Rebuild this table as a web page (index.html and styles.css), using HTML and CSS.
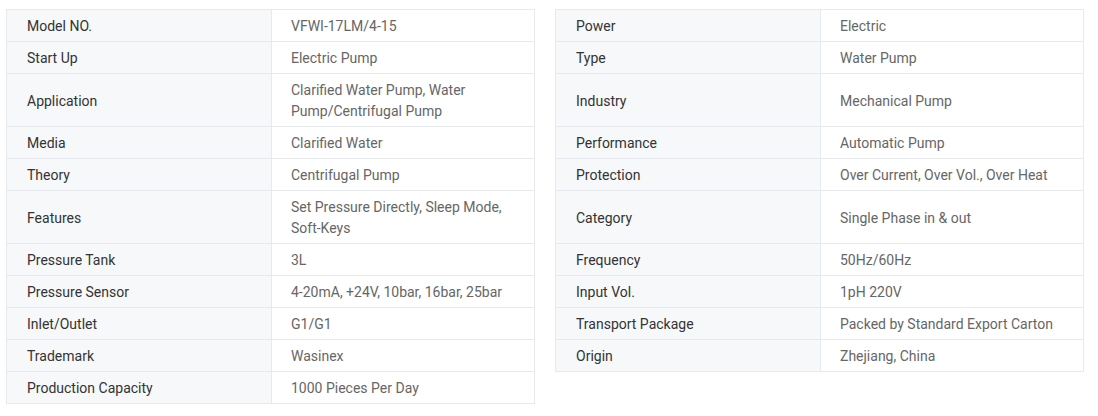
FILE: index.html
```html
<!DOCTYPE html>
<html>
<head>
<meta charset="utf-8">
<link rel="stylesheet" href="styles.css">
</head>
<body>
<div class="wrap">
  <table class="spec">
    <colgroup><col class="c-label"><col class="c-value"></colgroup>
    <tr><td class="label">Model NO.</td><td class="value">VFWI-17LM/4-15</td></tr>
    <tr><td class="label">Start Up</td><td class="value">Electric Pump</td></tr>
    <tr><td class="label">Application</td><td class="value">Clarified Water Pump, Water Pump/Centrifugal Pump</td></tr>
    <tr><td class="label">Media</td><td class="value">Clarified Water</td></tr>
    <tr><td class="label">Theory</td><td class="value">Centrifugal Pump</td></tr>
    <tr><td class="label">Features</td><td class="value">Set Pressure Directly, Sleep Mode, Soft-Keys</td></tr>
    <tr><td class="label">Pressure Tank</td><td class="value">3L</td></tr>
    <tr><td class="label">Pressure Sensor</td><td class="value">4-20mA, +24V, 10bar, 16bar, 25bar</td></tr>
    <tr><td class="label">Inlet/Outlet</td><td class="value">G1/G1</td></tr>
    <tr><td class="label">Trademark</td><td class="value">Wasinex</td></tr>
    <tr><td class="label">Production Capacity</td><td class="value">1000 Pieces Per Day</td></tr>
  </table>
  <table class="spec">
    <colgroup><col class="c-label"><col class="c-value"></colgroup>
    <tr><td class="label">Power</td><td class="value">Electric</td></tr>
    <tr><td class="label">Type</td><td class="value">Water Pump</td></tr>
    <tr class="tall"><td class="label">Industry</td><td class="value">Mechanical Pump</td></tr>
    <tr><td class="label">Performance</td><td class="value">Automatic Pump</td></tr>
    <tr><td class="label">Protection</td><td class="value">Over Current, Over Vol., Over Heat</td></tr>
    <tr class="tall"><td class="label">Category</td><td class="value">Single Phase in &amp; out</td></tr>
    <tr><td class="label">Frequency</td><td class="value">50Hz/60Hz</td></tr>
    <tr><td class="label">Input Vol.</td><td class="value">1pH 220V</td></tr>
    <tr><td class="label">Transport Package</td><td class="value">Packed by Standard Export Carton</td></tr>
    <tr><td class="label">Origin</td><td class="value">Zhejiang, China</td></tr>
  </table>
</div>
</body>
</html>
```
FILE: styles.css
```css
html, body {
  margin: 0;
  padding: 0;
  background: #ffffff;
}
body {
  font-family: Roboto, "Liberation Sans", Arial, sans-serif;
  font-size: 14px;
}
.wrap {
  display: flex;
  align-items: flex-start;
  gap: 20px;
  padding: 9px 0 0 6px;
}
.spec {
  width: 529px;
  table-layout: fixed;
  border-collapse: collapse;
  border: 1px solid #e6e9ef;
}
.c-label { width: 265px; }
.spec td {
  border: 1px solid #e6e9ef;
  padding: 6px 20px 4px;
  line-height: 21px;
  vertical-align: middle;
}
.spec .label {
  background: #f7f8fa;
  color: #333333;
}
.spec .value {
  background: #ffffff;
  color: #666666;
  padding-left: 19px;
}
.spec tr.tall td {
  height: 42px;
}
```
